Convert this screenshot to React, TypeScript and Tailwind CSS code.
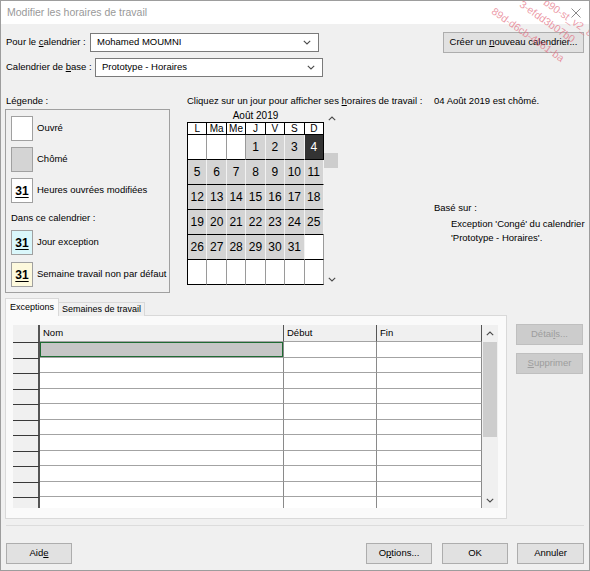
import React from 'react';

const font = "font-['Liberation_Sans',Arial,sans-serif]";

function ChevronDown({ className = '' }: { className?: string }) {
  return (
    <svg width="8" height="5" viewBox="0 0 8 5" className={className}>
      <path d="M0.8 0.8 L4 4 L7.2 0.8" fill="none" stroke="#4a4a4a" strokeWidth="1.1" />
    </svg>
  );
}

function ChevronUp({ className = '' }: { className?: string }) {
  return (
    <svg width="8" height="5" viewBox="0 0 8 5" className={className}>
      <path d="M0.8 4.2 L4 1 L7.2 4.2" fill="none" stroke="#4a4a4a" strokeWidth="1.1" />
    </svg>
  );
}

function Select({ value, className }: { value: string; className: string }) {
  return (
    <div className={`flex items-center h-[19px] bg-white border border-[#7a7a7a] pl-[6px] pr-[7px] ${className}`}>
      <span>{value}</span>
      <ChevronDown className="ml-auto" />
    </div>
  );
}

function Btn({ children, className = '' }: { children: React.ReactNode; className?: string }) {
  return (
    <div className={`flex items-center justify-center h-[21px] whitespace-pre bg-[#e1e1e1] border border-[#adadad] ${className}`}>
      {children}
    </div>
  );
}

function Swatch({ bg, num, label }: { bg: string; num?: boolean; label: string }) {
  return (
    <div className="flex items-center h-[25px]">
      <div className={`w-[22px] h-[25px] border border-[#a0a0a0] flex items-center justify-center ${bg}`}>
        {num && <span className="text-[12px] font-bold underline underline-offset-[2px] leading-none">31</span>}
      </div>
      <span className="ml-[4px]">{label}</span>
    </div>
  );
}

const weekdays = ['L', 'Ma', 'Me', 'J', 'V', 'S', 'D'];
const days: (number | null)[] = [
  null, null, null,
  ...Array.from({ length: 31 }, (_, i) => i + 1),
  null,
  ...Array(7).fill(null),
];

function Calendar() {
  return (
    <div className="flex shrink-0">
      <div className="w-[137px]">
        <div className="h-[13px] leading-[13px] text-center text-[10px]">Août 2019</div>
        <div className="grid grid-cols-7 border-l border-t border-black bg-white">
          {weekdays.map((w) => (
            <div key={w} className="h-[12px] leading-[11px] text-center text-[10px] border-r border-b border-black">
              {w}
            </div>
          ))}
          {days.map((d, i) => {
            const cls =
              d === 4
                ? 'bg-[#333333] text-white border-r-black'
                : d !== null
                ? 'bg-[#d4d4d4] border-r-[#f2f2f2]'
                : 'bg-white border-r-[#9a9a9a]';
            return (
              <div
                key={i}
                className={`h-[25px] flex items-center justify-center text-[12px] border-b border-b-black border-r ${cls}`}
              >
                {d}
              </div>
            );
          })}
        </div>
      </div>
      <div className="w-[16px] flex flex-col items-center">
        <ChevronUp className="mt-[7px]" />
        <div className="mt-[32px] w-[14px] h-[15px] bg-[#cdcdcd] self-start" />
        <ChevronDown className="mt-[109px]" />
      </div>
    </div>
  );
}

function TableRow({ first }: { first: boolean }) {
  return (
    <div className="flex h-[15.5px] shrink-0">
      <div className="w-[27px] bg-[#f0f0f0] border-t border-t-[#3a3a3a] border-r-2 border-r-[#555555]" />
      <div className="w-[244px] bg-white border-b border-b-[#a3a3a3] border-r border-r-[#8a8a8a]">
        {first && <div className="h-full w-full border border-[#1f6b33] bg-[#c6c6c6]" />}
      </div>
      <div className="w-[93px] bg-white border-b border-b-[#a3a3a3] border-r border-r-[#8a8a8a]" />
      <div className="w-[105px] bg-white border-b border-b-[#a3a3a3] border-r border-r-[#8a8a8a]" />
    </div>
  );
}

function ExceptionsTable() {
  return (
    <div className="flex h-[183px] w-[485px]">
      <div className="w-[469px] flex flex-col overflow-hidden">
        <div className="flex h-[17px] shrink-0 bg-[#f0f0f0]">
          <div className="w-[27px] border-r-2 border-r-[#555555]" />
          <div className="w-[244px] pl-[3px] flex items-center border-r border-r-[#555555] border-b border-b-[#a3a3a3]">Nom</div>
          <div className="w-[93px] pl-[3px] flex items-center border-r border-r-[#555555] border-b border-b-[#a3a3a3]">Début</div>
          <div className="w-[105px] pl-[3px] flex items-center border-r border-r-[#555555] border-b border-b-[#a3a3a3]">Fin</div>
        </div>
        {Array.from({ length: 11 }, (_, i) => (
          <TableRow key={i} first={i === 0} />
        ))}
      </div>
      <div className="w-[16px] h-full bg-[#f0f0f0] flex flex-col items-center">
        <div className="h-[17px] flex items-center">
          <ChevronUp />
        </div>
        <div className="w-[14px] h-[95px] bg-[#cdcdcd]" />
        <ChevronDown className="mt-auto mb-[5px]" />
      </div>
    </div>
  );
}

export default function App() {
  return (
    <div className={`relative w-[590px] h-[571px] overflow-hidden bg-[#f0f0f0] border border-[#9d9d9d] flex flex-col text-[9.5px] text-black ${font}`}>
      {/* title bar */}
      <div className="h-[23px] shrink-0 bg-white flex items-center pl-[6px] pr-[8px] text-[10.5px] text-[#999999]">
        <span>Modifier les horaires de travail</span>
        <svg width="10" height="10" viewBox="0 0 10 10" className="ml-auto">
          <path d="M0.5 0.5 L9.5 9.5 M9.5 0.5 L0.5 9.5" stroke="#8a8a8a" strokeWidth="1" />
        </svg>
      </div>

      <div className="flex flex-col pl-[4px] pr-[5px]">
        {/* calendar selectors */}
        <div className="mt-[8px] flex items-center h-[21px]">
          <div className="w-[85px] pl-[1px]">
            Pour le <span className="underline">c</span>alendrier :
          </div>
          <Select value="Mohamed MOUMNI" className="w-[229px]" />
          <Btn className="ml-auto w-[141px]">
            {'Créer un '}
            <span className="underline">n</span>
            {'ouveau calendrier...'}
          </Btn>
        </div>
        <div className="mt-[5px] flex items-center h-[19px]">
          <div className="w-[90px] pl-[1px]">
            Calendrier de <span className="underline">b</span>ase :
          </div>
          <Select value="Prototype - Horaires" className="w-[228px]" />
        </div>

        {/* legend + calendar */}
        <div className="mt-[18px] flex h-[198px]">
          <div className="w-[165px] shrink-0">
            <div className="ml-[1px] h-[12px] leading-[12px]">Légende :</div>
            <div className="mt-[2px] h-[184px] border border-[#a0a0a0] pl-[5px] pt-[6px]">
              <Swatch bg="bg-white" label="Ouvré" />
              <div className="mt-[6px]">
                <Swatch bg="bg-[#d4d4d4]" label="Chômé" />
              </div>
              <div className="mt-[6px]">
                <Swatch bg="bg-white" num label="Heures ouvrées modifiées" />
              </div>
              <div className="mt-[9px] h-[12px] leading-[12px]">Dans ce calendrier :</div>
              <div className="mt-[6px]">
                <Swatch bg="bg-[#daf7fb]" num label="Jour exception" />
              </div>
              <div className="mt-[7px]">
                <Swatch bg="bg-[#fdf9dd]" num label="Semaine travail non par défaut" />
              </div>
            </div>
          </div>

          <div className="ml-[17px] flex flex-col">
            <div className="flex h-[12px] leading-[12px] whitespace-nowrap">
              <div className="w-[247px] shrink-0">
                Cliquez sur un jour pour afficher ses <span className="underline">h</span>oraires de travail :
              </div>
              <div>04 Août 2019 est chômé.</div>
            </div>
            <div className="mt-[2px] flex">
              <Calendar />
              <div className="ml-[94px] pt-[92px] leading-[14px] whitespace-nowrap">
                <div>Basé sur :</div>
                <div className="ml-[17px] mt-[2px]">Exception 'Congé' du calendrier</div>
                <div className="ml-[17px]">'Prototype - Horaires'.</div>
              </div>
            </div>
          </div>
        </div>

        {/* tabs + exceptions table */}
        <div className="mt-[5px] flex">
          <div className="flex flex-col">
            <div className="flex items-end h-[18px] relative z-10 text-[9px]">
              <div className="h-[18px] px-[4px] flex items-center bg-[#fafafa] border-t border-x border-[#d9d9d9]">
                Exceptions
              </div>
              <div className="h-[14px] px-[3px] flex items-center bg-[#f0f0f0] border-t border-r border-[#d9d9d9]">
                Semaines de travail
              </div>
            </div>
            <div className="-mt-px w-[502px] h-[204px] bg-[#fafafa] border border-[#d9d9d9] pl-[7px] pt-[9px]">
              <ExceptionsTable />
            </div>
          </div>
          <div className="ml-[9px] pt-[26px] flex flex-col">
            <div className="w-[67px] h-[21px] flex items-center justify-center bg-[#cccccc] border border-[#bfbfbf] text-[#9d9d9d]">
              Détai<span className="underline">l</span>s...
            </div>
            <div className="mt-[8px] w-[67px] h-[21px] flex items-center justify-center bg-[#cccccc] border border-[#bfbfbf] text-[#9d9d9d]">
              <span className="underline">S</span>upprimer
            </div>
          </div>
        </div>

        {/* separator */}
        <div className="mt-[6px] ml-[1px] border-t border-[#dcdcdc]" />

        {/* bottom buttons */}
        <div className="mt-[17px] flex items-center">
          <Btn className="ml-[1px] w-[66px]">
            Aid<span className="underline">e</span>
          </Btn>
          <Btn className="ml-auto w-[66px]">
            O<span className="underline">p</span>tions...
          </Btn>
          <Btn className="ml-[10px] w-[66px] border-[#0078d7]">OK</Btn>
          <Btn className="ml-[9px] w-[67px]">Annuler</Btn>
        </div>
      </div>

      {/* watermark */}
      <div className="pointer-events-none absolute left-[548px] top-[-6px] rotate-[35deg] origin-top-left whitespace-nowrap text-[10.5px] text-[#e36b7e]/70">
        b90-st_v2_8
      </div>
      <div className="pointer-events-none absolute left-[524px] top-[-4px] rotate-[35deg] origin-top-left whitespace-nowrap text-[10.5px] text-[#e36b7e]/70">
        3-efdd3b07b0
      </div>
      <div className="pointer-events-none absolute left-[496px] top-[3px] rotate-[35deg] origin-top-left whitespace-nowrap text-[10.5px] text-[#e36b7e]/70">
        89d-d6cb-4b61-ba
      </div>
    </div>
  );
}
